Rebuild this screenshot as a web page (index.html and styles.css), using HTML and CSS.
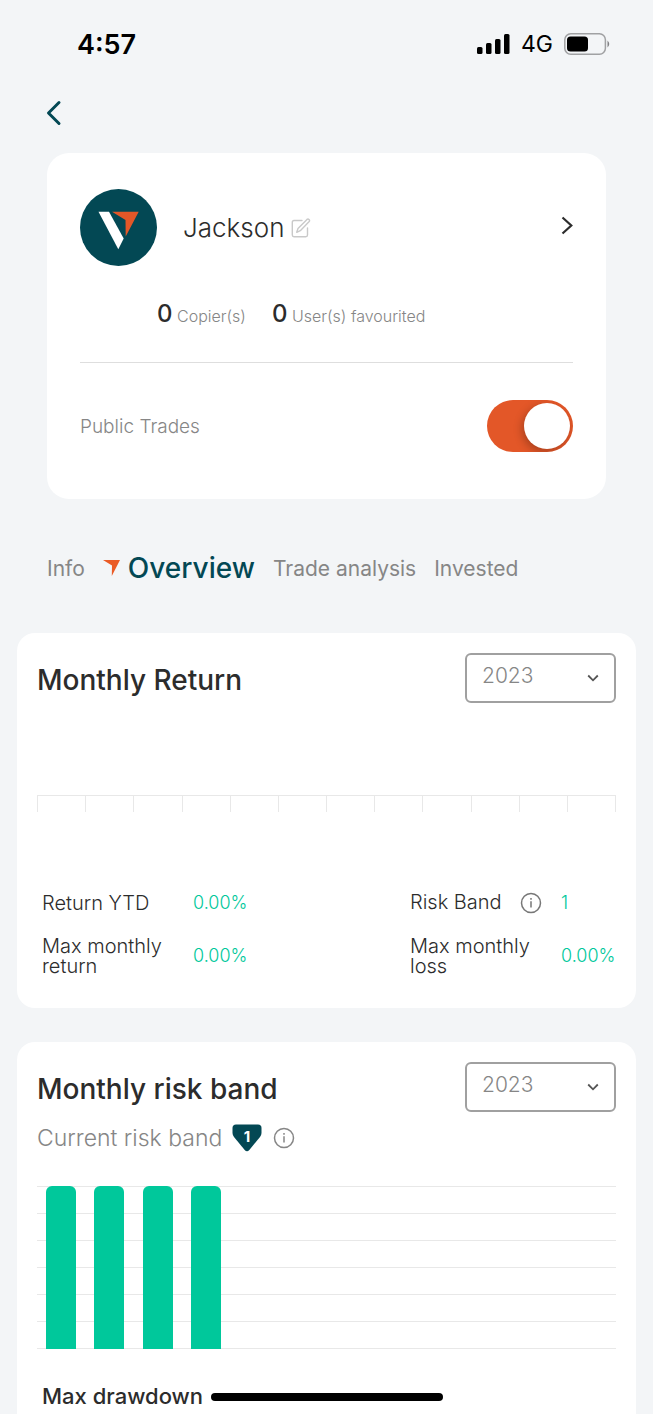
FILE: index.html
```html
<!DOCTYPE html>
<html lang="en">
<head>
<meta charset="utf-8">
<meta name="viewport" content="width=device-width, initial-scale=1">
<title>Signal provider overview</title>
<link rel="stylesheet" href="styles.css">
</head>
<body>
<div class="app">
  <header class="status">
    <span class="status-time">4:57</span>
    <div class="status-right">
      <svg width="33" height="22" viewBox="0 0 33 22" aria-hidden="true"><rect x="0" y="14" width="5.500" height="7" rx="1.500"/><rect x="9" y="10" width="5.500" height="11" rx="1.500"/><rect x="18" y="6" width="5.500" height="15" rx="1.500"/><rect x="27" y="1" width="5.500" height="20" rx="1.500"/></svg>
      <span class="status-net">4G</span>
      <svg width="46" height="22" viewBox="0 0 46 22" aria-hidden="true"><rect x=".8" y=".8" width="40.600" height="20.400" rx="6" fill="none" stroke="#a0a1a3" stroke-width="1.500"/><rect x="3" y="3.500" width="21" height="15" rx="3.500"/><path d="M43.500 7.500q3.500 3.500 0 7z" fill="#808184"/></svg>
    </div>
  </header>

  <nav class="topbar">
    <button class="icon-button" aria-label="Back"><svg width="18" height="26" viewBox="0 0 18 26"><path d="M15 2.500 4.500 13 15 23.500" fill="none" stroke="#034854" stroke-width="3" stroke-linecap="round" stroke-linejoin="round"/></svg></button>
  </nav>

  <section class="profile">
    <div class="profile-head">
      <svg class="avatar" width="77" height="77" viewBox="0 0 77 77" role="img" aria-label="Avatar"><circle cx="38.500" cy="38.500" r="38.500" fill="#034854"/><path d="M18.500 22.700H29L43.700 49.500 38.300 60.200z" fill="#fff"/><path d="M32 22.700h26.700L45.700 47.500 45.500 31z" fill="#e35728"/></svg>
      <h1 class="name">Jackson</h1>
      <button class="icon-button" aria-label="Edit name"><svg width="20" height="20" viewBox="0 0 20 20" fill="none" stroke="#c9c9c9" stroke-width="1.400" stroke-linecap="round" stroke-linejoin="round"><path d="M11 2.500H3Q1.300 2.500 1.300 4.200V17Q1.300 18.700 3 18.700H14.800Q16.500 18.700 16.500 17V10"/><path d="M5.700 14.300 7 10.500 16 1.400Q17 .6 18 1.500T18.200 3.500L9.300 12.700z"/></svg></button>
      <a class="profile-link" href="#profile" aria-label="Open profile"><svg width="12" height="20" viewBox="0 0 12 20"><path d="M1.500 2.500 10.300 10.500 1.500 18.500" fill="none" stroke="#2c2c2c" stroke-width="2.200"/></svg></a>
    </div>
    <div class="counts">
      <p class="count"><b class="count-value">0</b> Copier(s)</p>
      <p class="count"><b class="count-value">0</b> User(s) favourited</p>
    </div>
    <div class="setting">
      <label for="public">Public Trades</label>
      <input class="switch" id="public" type="checkbox" role="switch" checked>
    </div>
  </section>

  <nav class="tabs">
    <a class="tab" href="#info">Info</a>
    <a class="tab tab-active" href="#overview" aria-current="page"><svg width="17" height="16" viewBox="0 0 17 16" aria-hidden="true"><path d="M0 0h17L8.800 16 9 5.500z" fill="#ea5b26"/></svg>Overview</a>
    <a class="tab" href="#analysis">Trade analysis</a>
    <a class="tab" href="#invested">Invested</a>
  </nav>

  <main class="panels">
    <section class="panel">
      <div class="panel-head">
        <h2 class="panel-title">Monthly Return</h2>
        <div class="picker">
          <select class="picker-select" aria-label="Monthly return year"><option>2023</option><option>2022</option></select>
          <svg class="picker-arrow" width="12" height="8" viewBox="0 0 12 8" aria-hidden="true"><path d="M1.200 1.500 6 6.300 10.800 1.500" fill="none" stroke="#555" stroke-width="1.800"/></svg>
        </div>
      </div>
      <div class="axis"><i></i><i></i><i></i><i></i><i></i><i></i><i></i><i></i><i></i><i></i><i></i><i></i></div>
      <dl class="stats">
        <dt>Return YTD</dt><dd>0.00%</dd>
        <dt class="with-info">Risk Band <svg width="22" height="22" viewBox="0 0 22 22" aria-hidden="true"><circle cx="11" cy="11" r="9.500" fill="none" stroke="#777" stroke-width="1.500"/><path d="M11 9.200v6.300M11 6v1.700" stroke="#777" stroke-width="1.500"/></svg></dt><dd>1</dd>
        <dt>Max monthly return</dt><dd>0.00%</dd>
        <dt>Max monthly loss</dt><dd>0.00%</dd>
      </dl>
    </section>

    <section class="panel panel-last">
      <div class="panel-head">
        <h2 class="panel-title">Monthly risk band</h2>
        <div class="picker">
          <select class="picker-select" aria-label="Monthly risk band year"><option>2023</option><option>2022</option></select>
          <svg class="picker-arrow" width="12" height="8" viewBox="0 0 12 8" aria-hidden="true"><path d="M1.200 1.500 6 6.300 10.800 1.500" fill="none" stroke="#555" stroke-width="1.800"/></svg>
        </div>
      </div>
      <p class="current">Current risk band
        <svg class="badge" width="30" height="28" viewBox="0 0 30 28"><path d="M4 .5H26Q29.500 .5 29.500 4V9Q29.500 11 28 13L17.300 26Q15 28.500 12.700 26L2 13Q.5 11 .5 9V4Q.5 .5 4 .5z" fill="#034854"/><text x="15" y="18" text-anchor="middle" class="badge-text">1</text></svg>
        <svg width="22" height="22" viewBox="0 0 22 22" aria-hidden="true"><circle cx="11" cy="11" r="9.500" fill="none" stroke="#868686" stroke-width="1.500"/><path d="M11 9.200v6.300M11 6v1.700" stroke="#868686" stroke-width="1.500"/></svg>
      </p>
      <div class="chart"><i class="bar"></i><i class="bar"></i><i class="bar"></i><i class="bar"></i></div>
      <h3 class="sub-title">Max drawdown</h3>
    </section>
  </main>
  <div class="home-indicator"></div>
</div>
</body>
</html>
```
FILE: styles.css
```css
* { box-sizing: border-box; }
body {
  margin: 0;
  background: #f3f5f7;
  color: #2c2c2c;
  font-family: Inter, "Liberation Sans", sans-serif;
  font-weight: 300;
}
h1, h2, h3, p, dl, dd { margin: 0; }
svg { display: block; flex: none; }
.app { display: flex; flex-direction: column; min-height: 100vh; }

.status {
  display: flex;
  align-items: center;
  justify-content: space-between;
  height: 88px;
  padding: 0 43px 0 77px;
  color: #000;
}
.status-time { font-size: 27px; font-weight: 600; }
.status-right { display: flex; align-items: center; gap: 11px; }
.status-net { font-size: 23px; font-weight: 400; }

.icon-button { padding: 0; border: 0; background: none; }
.topbar { display: flex; align-items: center; height: 50px; padding: 0 44px; }

.profile {
  margin: 15px 47px 0;
  padding: 36px 33px 47px;
  border-radius: 22px;
  background: #fff;
}
.profile-head { display: flex; align-items: center; }
.name { margin: 0 7px 0 26px; font-size: 26px; font-weight: 300; line-height: 32px; }
.profile-link { margin-left: auto; padding-bottom: 6px; }
.counts {
  display: flex;
  gap: 26px;
  padding: 32px 0 30px 77px;
  border-bottom: 1px solid #dedede;
  color: #868686;
  font-size: 16px;
  line-height: 32px;
}
.count-value { color: #2c2c2c; font-size: 24px; font-weight: 500; }
.setting {
  display: flex;
  align-items: center;
  justify-content: space-between;
  padding-top: 37px;
  color: #868686;
  font-size: 19px;
}
.switch {
  display: flex;
  align-items: center;
  justify-content: flex-end;
  width: 86px;
  height: 52px;
  margin: 0;
  padding: 3px;
  overflow: hidden;
  appearance: none;
  border-radius: 26px;
  background: #e35728;
}
.switch::before {
  content: "";
  width: 46px;
  height: 46px;
  border-radius: 50%;
  background: #fff;
  box-shadow: -2px 3px 8px rgba(0, 0, 0, .25);
}

.tabs { display: flex; align-items: baseline; gap: 18px; padding: 49px 47px 0; line-height: 40px; }
.tab { color: #868686; font-size: 21px; font-weight: 400; text-decoration: none; white-space: nowrap; }
.tab-active { display: flex; align-items: center; gap: 8px; color: #034854; font-size: 28px; font-weight: 500; }

.panels { display: flex; flex: 1; flex-direction: column; gap: 34px; padding: 44px 17px 0; }
.panel { padding: 20px 20px 32px; border-radius: 18px; background: #fff; }
.panel-last { flex: 1; padding-bottom: 0; border-radius: 18px 18px 0 0; }
.panel-head { display: flex; align-items: center; justify-content: space-between; }
.panel-title { padding-top: 3px; font-size: 28px; font-weight: 550; line-height: 36px; }
.picker { display: grid; align-items: center; width: 151px; }
.picker > * { grid-area: 1 / 1; }
.picker-select {
  height: 50px;
  padding: 0 15px 5px;
  appearance: none;
  border: 2px solid #a0a0a0;
  border-radius: 6px;
  background: #fff;
  color: #868686;
  font: 300 21px Inter, "Liberation Sans", sans-serif;
}
.picker-arrow { justify-self: end; margin-right: 17px; pointer-events: none; }

.axis { display: flex; height: 17px; margin-top: 92px; border: solid #e8e8e8; border-width: 1px 1px 0 0; }
.axis i { flex: 1; border-left: 1px solid #e8e8e8; }

.stats {
  display: grid;
  grid-template-columns: 151px 1fr 151px 55px;
  align-items: center;
  row-gap: 22px;
  margin-top: 80px;
  padding-left: 5px;
  font-size: 20px;
  line-height: 20px;
}
.stats dt { padding-right: 20px; }
.stats dd { color: #00c89b; font-size: 18px; }
.stats .with-info { display: flex; justify-content: space-between; padding-right: 19px; white-space: nowrap; }

.current { display: flex; align-items: center; margin-top: 11px; color: #868686; font-size: 23px; line-height: 30px; }
.badge { margin: 0 11px 0 10px; }
.badge-text { fill: #fff; font-size: 15px; font-weight: 700; }
.chart {
  display: grid;
  grid-template-columns: repeat(12, 1fr);
  justify-items: center;
  height: 164px;
  margin-top: 33px;
  background: repeating-linear-gradient(#e8e8e8 0 1px, transparent 1px 27px);
}
.bar { width: 30px; height: 163px; border-radius: 6px 6px 0 0; background: #00c89b; }
.sub-title { margin-top: 31px; padding-left: 5px; font-size: 22px; font-weight: 550; line-height: 30px; }

.home-indicator {
  position: fixed;
  bottom: 13px;
  left: 50%;
  width: 232px;
  height: 8px;
  margin-left: -116px;
  border-radius: 4px;
  background: #000;
}
```
